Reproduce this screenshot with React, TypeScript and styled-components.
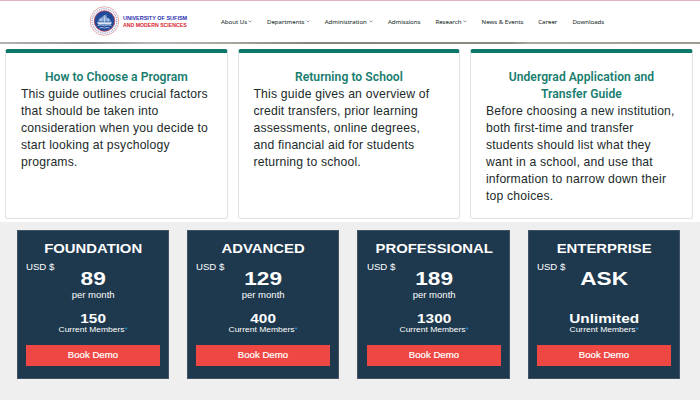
import React from "react";
import styled, { createGlobalStyle } from "styled-components";

const Global = createGlobalStyle`
  *, *::before, *::after { box-sizing: border-box; }
  body { margin: 0; background: #efefef; font-family: "Liberation Sans", Arial, sans-serif; overflow: hidden; }
`;

const Page = styled.div`
  width: 700px;
  height: 400px;
  background: #efefef;
  overflow: hidden;
`;

const Header = styled.header`
  display: flex;
  align-items: flex-start;
  height: 42px;
  padding-left: 89px;
  background: #fff;
  border-top: 1px solid #e3b3bd;
`;

const Brand = styled.a`
  display: flex;
  align-items: center;
  width: 132px;
  height: 40px;
  flex: none;
`;

const BrandName = styled.div`
  padding: 2px 0 0 3px;
  font-size: 5.9px;
  font-weight: 700;
  line-height: 7px;
  white-space: nowrap;
`;

const BrandLine = styled.div<{ $color: string; $stretch: number }>`
  width: max-content;
  color: ${(p) => p.$color};
  transform: scaleX(${(p) => p.$stretch});
  transform-origin: left;
`;

const Nav = styled.nav`
  display: flex;
  gap: 15px;
  height: 41px;
  align-items: center;
`;

const NavItem = styled.a<{ $width: number }>`
  display: flex;
  align-items: center;
  justify-content: space-between;
  width: ${(p) => p.$width}px;
  font: 500 6.1px/10px "Open Sans", "Noto Sans", sans-serif;
  color: #303a39;
  -webkit-text-stroke: 0.1px #303a39;
  white-space: nowrap;
`;

const Divider = styled.div`
  height: 2px;
  background: linear-gradient(90deg, #b5b5b5 0, #8d8d8b 90px, #b9b9b6 150px, #a8a69e 230px, #85857c 310px, #8c8b80 510px, #aaa79c 530px, #9e9a90 700px);
`;

const Guides = styled.section`
  display: grid;
  grid-template-columns: repeat(3, 222.3px);
  column-gap: 10.2px;
  height: 178px;
  padding: 5px 0 0 5.3px;
  background: #fff;
`;

const GuideCard = styled.article`
  height: 169.5px;
  padding: 16px 14.7px 0;
  border: 1px solid #dfe2e2;
  border-top: 4.5px solid #0b7869;
  border-radius: 3px;
  background: #fff;
`;

const GuideTitle = styled.h2`
  margin: 0;
  text-align: center;
  font: 600 12.1px/17px Roboto, sans-serif;
  letter-spacing: 0.06px;
  color: #187d6e;
`;

const GuideText = styled.p`
  margin: -0.5px 0 0;
  font-size: 12.2px;
  line-height: 17px;
  letter-spacing: 0.19px;
  color: #222a2a;
  white-space: nowrap;
`;

const Plans = styled.section`
  display: grid;
  grid-template-columns: repeat(4, 152.3px);
  column-gap: 18px;
  padding: 8px 0 0 16.8px;
`;

const PlanCard = styled.article`
  display: flex;
  flex-direction: column;
  height: 148.5px;
  padding: 11px 8.8px 0 9.2px;
  background: #1e394e;
  border: 1px solid #3f5364;
  color: #fff;
  text-align: center;
`;

const Wide = styled.div<{ $size: number; $line: number; $bold?: boolean; $left?: boolean; $stretch?: number }>`
  display: block;
  font-size: ${(p) => p.$size}px;
  line-height: ${(p) => p.$line}px;
  height: ${(p) => p.$line}px;
  font-weight: ${(p) => (p.$bold ? 700 : 400)};
  text-align: ${(p) => (p.$left ? "left" : "center")};
  white-space: nowrap;
  transform: scaleX(${(p) => p.$stretch ?? 1.18});
  transform-origin: ${(p) => (p.$left ? "left" : "center")};
`;

const Currency = styled(Wide)`
  margin-left: -0.8px;
`;

const Star = styled.span`
  color: #1d97de;
`;

const DemoButton = styled.button`
  height: 21px;
  margin: 10px -0.8px 0;
  padding: 0;
  border: 0;
  background: #ee4744;
  color: #fff;
  font-family: inherit;
  -webkit-text-stroke: 0.2px #fff;
`;

const Seal = () => (
  <svg width="31" height="30" viewBox="0 0 31 30">
    <circle cx="15.5" cy="15" r="14.3" fill="#fff" stroke="#dc9aa0" strokeWidth=".8" />
    <circle cx="15.5" cy="15" r="12.2" fill="none" stroke="#a3a6c9" strokeWidth="1.5" strokeDasharray="1 .9" />
    <circle cx="15.5" cy="15" r="10.3" fill="#214b9a" stroke="#c3434f" strokeWidth=".8" />
    <path d="M8 16.2h15l-1.3 2.2H9.4z" fill="#dce7f3" />
    <path d="M9 15.4c1-3 2.7-4 4.2-4.1l1-2.3 1 2.6 2-3.8.7 3.9c2.2.4 3.5 1.8 4.3 3.7z" fill="#86a7d1" />
    <path d="M8.5 19.7c2.2-1 4.4-.8 7 .2 2.5-1 4.8-1.2 7-.2M10.5 22c2-.7 3.3-.6 5 .1 1.6-.7 3.2-.8 5-.1" fill="none" stroke="#bdd0e7" strokeWidth=".8" />
    <path d="M15.5 9v7M12 12.5v3M19 12v3.5" stroke="#eef4fb" strokeWidth=".6" />
  </svg>
);

const Chevron = () => (
  <svg width="4" height="3" viewBox="0 0 4 3">
    <path d="M.5.7 2 2.1 3.5.7" fill="none" stroke="#66706f" strokeWidth=".7" />
  </svg>
);

const links = [
  { label: "About Us", width: 31, menu: true },
  { label: "Departments", width: 42.7, menu: true },
  { label: "Administration", width: 48.3, menu: true },
  { label: "Admissions", width: 32.4 },
  { label: "Research", width: 31.2, menu: true },
  { label: "News & Events", width: 41.7 },
  { label: "Career", width: 19.2 },
  { label: "Downloads", width: 32 },
];

const guides = [
  {
    title: ["How to Choose a Program"],
    text: ["This guide outlines crucial factors", "that should be taken into", "consideration when you decide to", "start looking at psychology", "programs."],
  },
  {
    title: ["Returning to School"],
    text: ["This guide gives an overview of", "credit transfers, prior learning", "assessments, online degrees,", "and financial aid for students", "returning to school."],
  },
  {
    title: ["Undergrad Application and", "Transfer Guide"],
    text: ["Before choosing a new institution,", "both first-time and transfer", "students should list what they", "want in a school, and use that", "information to narrow down their", "top choices."],
  },
];

const plans = [
  { name: "FOUNDATION", price: "89", period: "per month", members: "150" },
  { name: "ADVANCED", price: "129", period: "per month", members: "400" },
  { name: "PROFESSIONAL", price: "189", period: "per month", members: "1300" },
  { name: "ENTERPRISE", price: "ASK", period: "", members: "Unlimited" },
];

const Lines = ({ items }: { items: string[] }) => (
  <>
    {items.map((line, i) => (
      <React.Fragment key={line}>
        {i > 0 && <br />}
        {line}
      </React.Fragment>
    ))}
  </>
);

export default function App() {
  return (
    <Page>
      <Global />
      <Header>
        <Brand>
          <Seal />
          <BrandName>
            <BrandLine $color="#2b2fb0" $stretch={0.93}>UNIVERSITY OF SUFISM</BrandLine>
            <BrandLine $color="#d9232e" $stretch={0.88}>AND MODERN SCIENCES</BrandLine>
          </BrandName>
        </Brand>
        <Nav>
          {links.map((l) => (
            <NavItem key={l.label} $width={l.width}>
              {l.label}
              {l.menu && <Chevron />}
            </NavItem>
          ))}
        </Nav>
      </Header>
      <Divider />
      <Guides>
        {guides.map((g) => (
          <GuideCard key={g.title[0]}>
            <GuideTitle><Lines items={g.title} /></GuideTitle>
            <GuideText><Lines items={g.text} /></GuideText>
          </GuideCard>
        ))}
      </Guides>
      <Plans>
        {plans.map((p) => (
          <PlanCard key={p.name}>
            <Wide $size={12.6} $line={14} $bold>{p.name}</Wide>
            <Currency $size={8.6} $line={23} $left $stretch={1.12}>USD $</Currency>
            <Wide as="strong" $size={19.2} $line={0} $bold>{p.price}</Wide>
            <Wide $size={8.5} $line={33} $stretch={1.12}>{p.period}</Wide>
            <Wide $size={13} $line={13} $bold>{p.members}</Wide>
            <Wide $size={7.5} $line={10} $stretch={1.13}>Current Members<Star>*</Star></Wide>
            <DemoButton><Wide as="span" $size={8.5} $line={21} $stretch={1.13}>Book Demo</Wide></DemoButton>
          </PlanCard>
        ))}
      </Plans>
    </Page>
  );
}
